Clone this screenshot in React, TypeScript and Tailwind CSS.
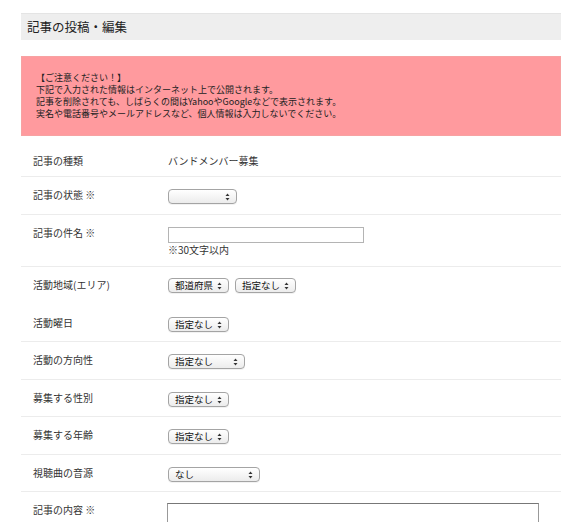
import React from "react";

const font = { fontFamily: '"Noto Sans CJK JP", "Noto Sans", sans-serif' };

function Arrow() {
  return (
    <svg width="5" height="8" viewBox="0 0 5 8" className="shrink-0">
      <path d="M0.5 3 L2.5 0.5 L4.5 3 Z" fill="#333" />
      <path d="M0.5 5 L2.5 7.5 L4.5 5 Z" fill="#333" />
    </svg>
  );
}

function FakeSelect({ label, w }: { label: string; w: string }) {
  return (
    <div
      className={`${w} h-[15px] flex items-center justify-between pl-[6px] pr-[6px] rounded-[4px] border border-[#a4a4a4] bg-gradient-to-b from-white to-[#ececec] shadow-[0_1px_0_rgba(0,0,0,0.05)]`}
    >
      <span className="text-[9.5px] leading-none text-[#111]">{label}</span>
      <Arrow />
    </div>
  );
}

function Row({
  label,
  children,
  border = true,
  pt = "pt-[12px]",
  pb = "pb-[10px]",
}: {
  label: string;
  children: React.ReactNode;
  border?: boolean;
  pt?: string;
  pb?: string;
}) {
  return (
    <div className={`flex ${border ? "border-b border-[#ececec]" : "border-b border-transparent"}`}>
      <div className="w-[147px] shrink-0 pl-[12px] pt-[11px] text-[10px] leading-[14px] text-[#333]">
        {label}
      </div>
      <div className={`flex-1 ${pt} ${pb}`}>{children}</div>
    </div>
  );
}

export default function App() {
  return (
    <div className="w-[580px] h-[522px] bg-white overflow-hidden" style={font}>
      <div className="ml-[21px] w-[540px] pt-[13px]">
        <div className="h-[27px] bg-[#eeeeee] border-t border-[#e4e4e4] flex items-center pl-[6px]">
          <h1 className="text-[12.5px] text-[#222] leading-none">記事の投稿・編集</h1>
        </div>

        <div className="mt-[16px] bg-[#ff9a9e] border border-[#f7a2a2] pt-[15px] pb-[15px] pl-[14px] text-[9px] leading-[12px] text-[#222]">
          <p>【ご注意ください！】</p>
          <p>下記で入力された情報はインターネット上で公開されます。</p>
          <p>記事を削除されても、しばらくの間はYahooやGoogleなどで表示されます。</p>
          <p>実名や電話番号やメールアドレスなど、個人情報は入力しないでください。</p>
        </div>

        <div className="mt-[8px]">
          <div className="flex border-b border-[#ececec]">
            <div className="w-[147px] shrink-0 pl-[12px] pt-[10px] pb-[8px] text-[10px] leading-[14px] text-[#333]">
              記事の種類
            </div>
            <div className="flex-1 pt-[10px] pb-[8px] text-[10px] leading-[14px] text-[#333]">
              バンドメンバー募集
            </div>
          </div>

          <Row label="記事の状態 ※">
            <FakeSelect label="" w="w-[69px]" />
          </Row>

          <Row label="記事の件名 ※" pb="pb-[9px]">
            <div className="w-[196px] h-[16px] border border-[#b4b4b4] bg-white" />
            <div className="text-[10px] leading-[14px] text-[#333]">※30文字以内</div>
          </Row>

          <Row label="活動地域(エリア)" border={false} pt="pt-[11px]" pb="pb-[11px]">
            <div className="flex gap-[6px]">
              <FakeSelect label="都道府県" w="w-[61px]" />
              <FakeSelect label="指定なし" w="w-[61px]" />
            </div>
          </Row>

          <Row label="活動曜日" pb="pb-[9px]">
            <FakeSelect label="指定なし" w="w-[61px]" />
          </Row>

          <Row label="活動の方向性">
            <FakeSelect label="指定なし" w="w-[77px]" />
          </Row>

          <Row label="募集する性別" pb="pb-[9px]">
            <FakeSelect label="指定なし" w="w-[61px]" />
          </Row>

          <Row label="募集する年齢">
            <FakeSelect label="指定なし" w="w-[61px]" />
          </Row>

          <Row label="視聴曲の音源" pb="pb-[9px]">
            <FakeSelect label="なし" w="w-[92px]" />
          </Row>

          <div className="flex">
            <div className="w-[146px] shrink-0 pl-[12px] pt-[11px] text-[10px] leading-[14px] text-[#333]">
              記事の内容 ※
            </div>
            <div className="flex-1 pt-[11px]">
              <div className="w-[372px] h-[60px] border border-[#999] border-t-[#777] bg-white" />
            </div>
          </div>
        </div>
      </div>
    </div>
  );
}
